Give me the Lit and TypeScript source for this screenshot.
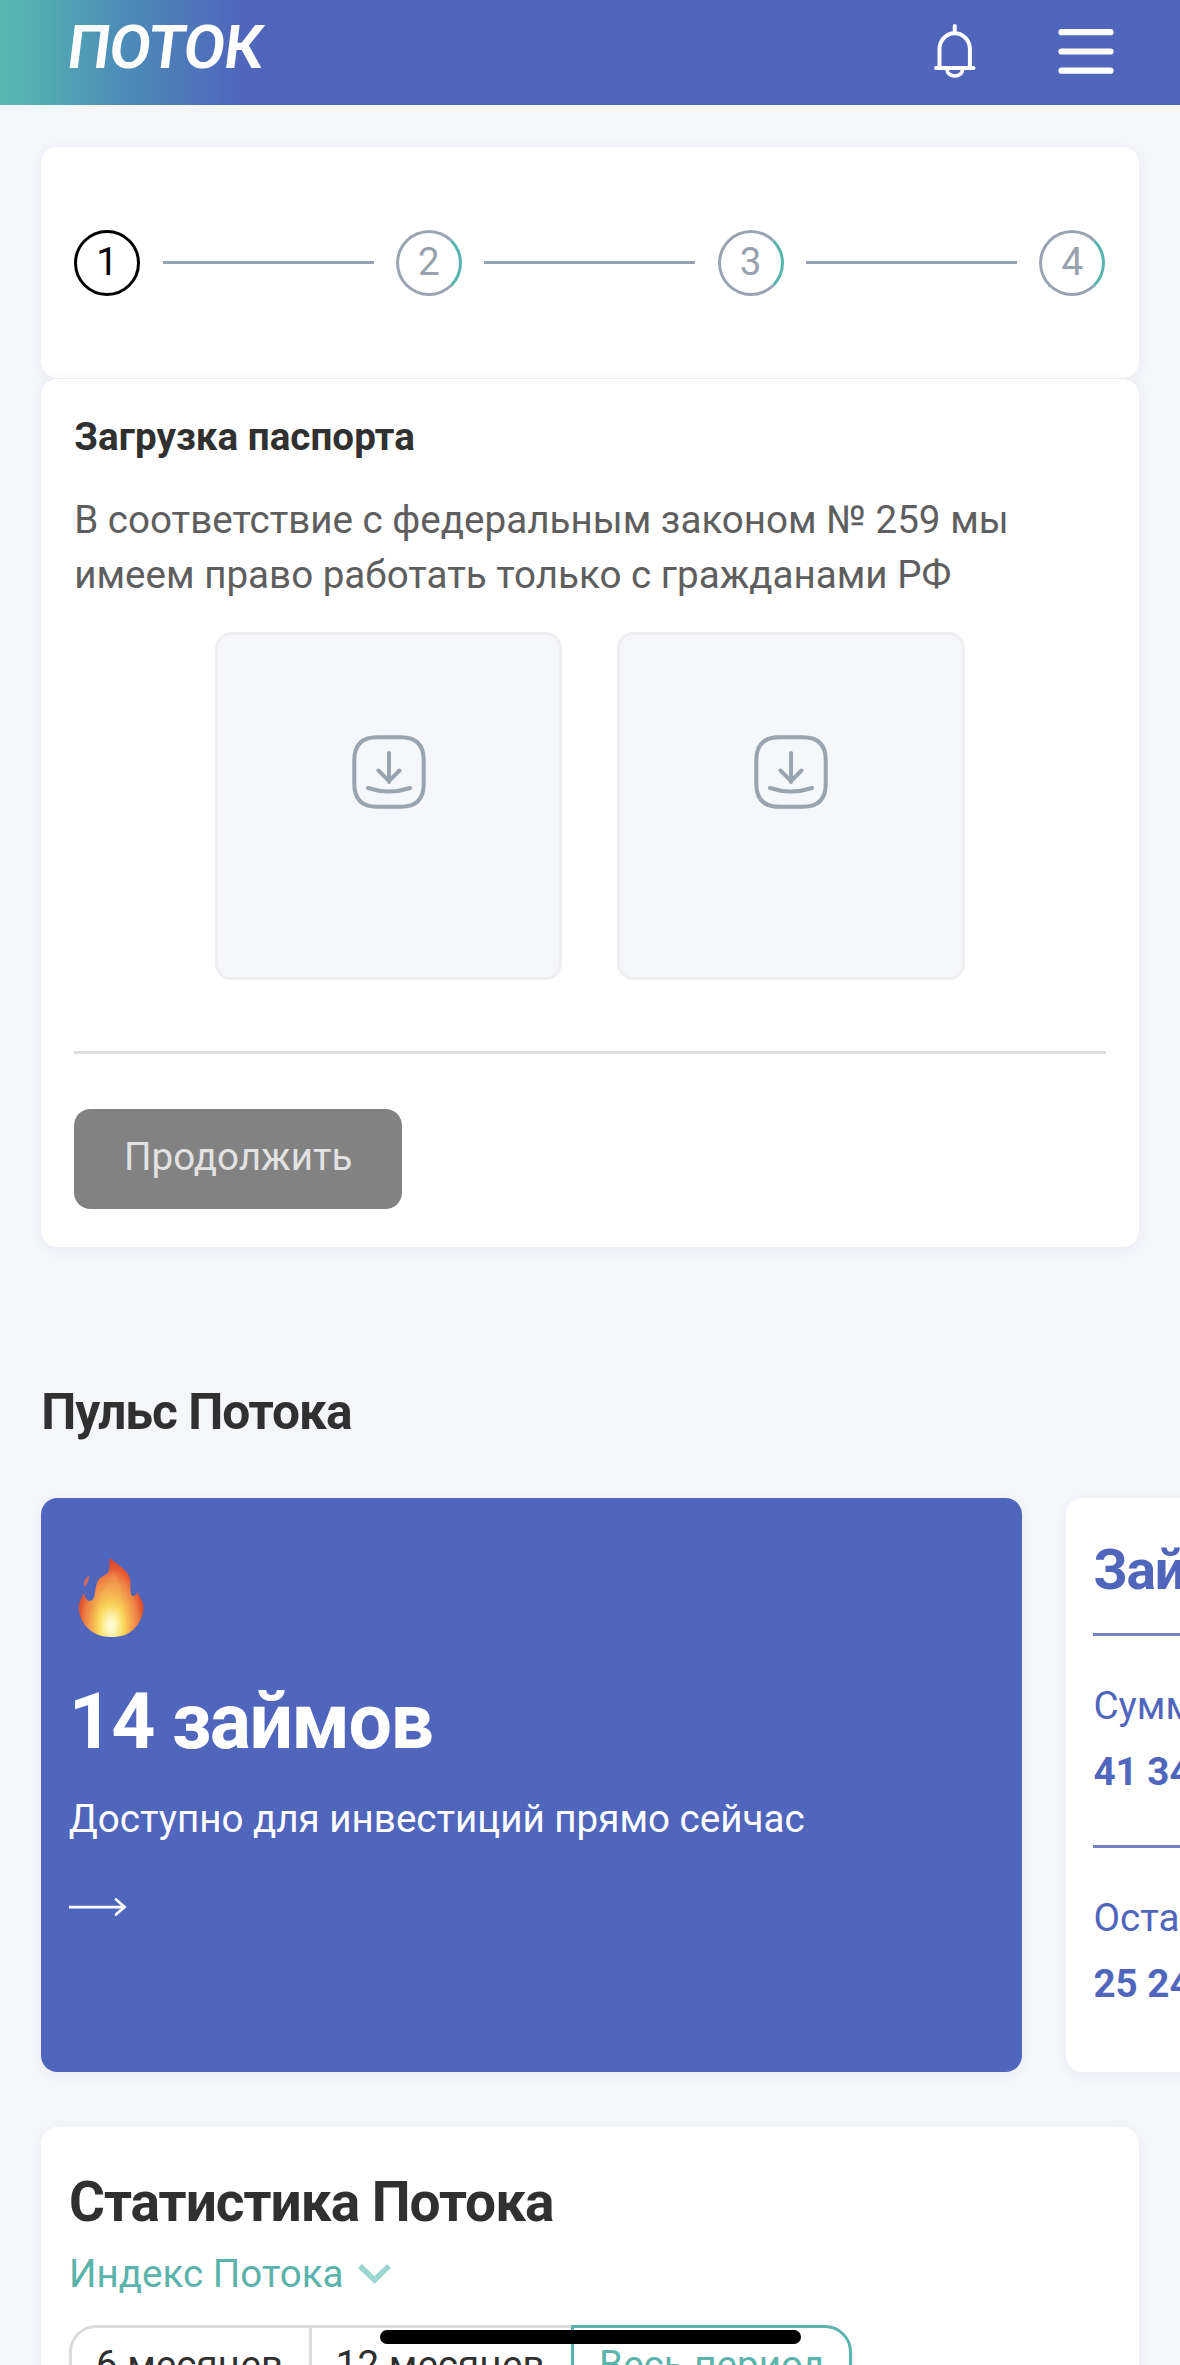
import { LitElement, html, css } from "lit";
import { customElement, property } from "lit/decorators.js";

const downloadIcon = html`<svg width="74" height="74" viewBox="0 0 74 74" fill="none" stroke="#9aa4b1" stroke-width="4" stroke-linecap="round" stroke-linejoin="round">
  <path d="M25 2.3 H49 C64 2.3 71.700 10 71.700 25 V49 C71.700 64 64 71.700 49 71.700 H25 C10 71.700 2.300 64 2.300 49 V25 C2.300 10 10 2.300 25 2.300 Z"/>
  <path d="M37 18 V47 M26.500 35.500 L37 46.200 L47.500 35.500 M16 53 Q37 60 58 53"/>
</svg>`;

const flameIcon = html`<svg class="flame" width="66" height="82" viewBox="0 0 66 82">
  <defs>
    <radialGradient id="fire" gradientUnits="userSpaceOnUse" cx="33" cy="70" r="64" gradientTransform="translate(33 70) scale(.54 1) translate(-33 -70)">
      <stop offset="0" stop-color="#fffce0"/>
      <stop offset=".14" stop-color="#fdf5b4"/>
      <stop offset=".36" stop-color="#f9d95c"/>
      <stop offset=".58" stop-color="#f3a64c"/>
      <stop offset=".76" stop-color="#ee8247"/>
      <stop offset=".92" stop-color="#e4552f"/>
      <stop offset="1" stop-color="#df492a"/>
    </radialGradient>
    <linearGradient id="core" x1="0" y1="0" x2="0" y2="1">
      <stop offset="0" stop-color="#f0864a" stop-opacity=".3"/>
      <stop offset=".4" stop-color="#f4a851" stop-opacity=".8"/>
      <stop offset="1" stop-color="#f9d65a" stop-opacity="0"/>
    </linearGradient>
  </defs>
  <path fill="url(#fire)" d="M32 1.500 C35 6.500 45 10 50.500 19 C54.500 27 51 34 53.500 39.500 C57 41 59 38 59.300 35.500 C61 41 65.500 45 65.500 52 C65 61 61 68 56 73 C50 79 43 81 33 81 C23 81 16 78 9.500 72 C4 66 .5 59 .8 51 C1 45 4 41 6.300 37 C6.800 41 8 45 12 44.800 C18 44 16 35 19 27 C22 18 29 21 31 14 C32 10 31 6 32 1.500 Z"/>
  <path fill="url(#core)" d="M34 15 C42 22 43 31 43 42 L45 60 H19 L23 42 C24 33 34 26 34 15 Z"/>
  <path fill="#c9695f" d="M11.500 19.500 C6.500 22 5 26 6.500 31 C10 28 10.500 24 11.500 19.500 Z"/>
</svg>`;

@customElement("step-progress")
class StepProgress extends LitElement {
  @property({ type: Number }) total = 4;
  @property({ type: Number }) current = 1;

  static styles = css`
    :host { display: flex; align-items: center; justify-content: space-between; }
    .dot {
      box-sizing: border-box; width: 66px; height: 66px; border-radius: 50%;
      border: 3px solid #9aa4b1; border-right-color: #56b5ac; color: #9aa1ae;
      font-size: 38.6px; line-height: 57px; text-align: center; flex: none;
    }
    .dot.active { border-color: #000; color: #000; }
    .line { width: 211px; height: 3px; background: #97a2b0; }
  `;

  render() {
    const steps = Array.from({ length: this.total }, (_, i) => i + 1);
    return steps.map((n) => html`
      ${n > 1 ? html`<div class="line"></div>` : ""}
      <div class="dot ${n === this.current ? "active" : ""}">${n}</div>`);
  }
}

@customElement("app-root")
class AppRoot extends LitElement {
  static styles = css`
    :host {
      display: block; position: relative; width: 1180px; height: 2365px; overflow: hidden;
      background: #f4f6fa; color: #303030;
      font-family: Roboto, "Liberation Sans", sans-serif; font-size: 38.6px; line-height: 55px;
    }
    h1, h2, h3, p { margin: 0; }
    svg { display: block; }
    .header {
      box-sizing: border-box; height: 104.5px; padding: 0 66px 0 68px; display: flex; align-items: flex-start;
      background: linear-gradient(90deg, #57b8b0 0, #56b5b0 16px, #4c8db7 120px, #5065bc 245px);
    }
    .logo {
      margin: 12px auto 0 0; font-size: 60.5px; line-height: 72px; font-weight: 600;
      color: #fff; transform: skewX(-7deg); letter-spacing: -1.1px;
    }
    .bell { margin: 24px 82px 0 0; }
    .menu { margin-top: 28px; }
    .page { padding: 42.500px 41.500px 0 41.200px; }
    .card { background: #fff; border-radius: 16.500px; box-shadow: 0 3px 14px rgba(60, 66, 120, .06); }
    .steps { box-sizing: border-box; height: 231px; padding: 82.500px 33px 0; }
    .upload { margin-top: 1px; padding: 30.300px 33px 38px; }
    .upload-title { font-size: 38.6px; line-height: 55px; font-weight: 700; letter-spacing: .03px; }
    .upload-text { margin-top: 28px; color: #5e5e5e; }
    .slots { margin-top: 30px; display: flex; justify-content: center; gap: 55px; }
    .slot {
      box-sizing: border-box; width: 347.500px; height: 347.500px; border: 3px solid #efeff2; border-radius: 16.500px;
      background: #f6f7fa; display: flex; justify-content: center; padding-top: 99.800px;
    }
    .divider { margin-top: 71.500px; height: 3px; background: #dedede; }
    .button {
      margin-top: 55px; width: 328px; height: 99.500px; border: 0; border-radius: 16.500px; background: #828282; color: #e2e2e2;
      font: inherit; display: flex; justify-content: center; padding: 20px 0 0;
    }
    .section-title { margin-top: 135.500px; font-size: 49.6px; line-height: 60px; font-weight: 700; letter-spacing: -1px; }
    .pulse { margin-top: 55.500px; display: flex; gap: 44px; height: 574px; }
    .loans { box-sizing: border-box; width: 980.800px; flex: none; background: #5065bc; color: #fff; padding: 58.500px 27.500px 0; }
    .flame { margin-left: 9px; }
    .loans-count { margin-top: 39px; font-size: 77px; line-height: 90px; font-weight: 700; letter-spacing: -1.500px; }
    .loans-text { margin-top: 23.500px; }
    .arrow { margin-top: 50.500px; }
    .totals { box-sizing: border-box; width: 980.500px; flex: none; color: #5065bc; padding: 39.200px 27.500px 0; white-space: nowrap; }
    .totals-title { font-size: 55px; line-height: 66px; font-weight: 700; letter-spacing: -1.050px; }
    .rule { height: 3px; background: #7182c6; margin: 30px 0 42px; }
    .rule.second { margin-top: 46px; }
    .value { margin-top: 11.200px; font-weight: 700; }
    .stats { margin-top: 55px; height: 400px; box-sizing: border-box; padding: 42.200px 27.800px 0; }
    .stats-title { font-size: 55px; line-height: 66px; font-weight: 700; letter-spacing: -1px; }
    .select { margin-top: 11px; display: flex; align-items: center; gap: 14px; color: #5bb4ab; }
    .chevron { margin-top: 2px; }
    .periods { margin-top: 24.300px; display: flex; }
    .period {
      box-sizing: border-box; height: 92px; border: 3px solid #dcdcdc; border-right-width: 0;
      padding: 8.500px 0 0; text-align: center;
    }
    .p6 { width: 240px; padding-right: 2px; border-radius: 27px 0 0 27px; }
    .p12 { width: 262.500px; padding-right: 3px; }
    .all { width: 281px; border: 3px solid #5bb4ab; border-radius: 0 27px 27px 0; color: #5bb4ab; }
    .home-bar { position: absolute; left: 379.500px; top: 2330px; width: 421.500px; height: 14px; border-radius: 7px; background: #000; }
  `;

  render() {
    return html`
      <header class="header">
        <div class="logo">ПОТОК</div>
        <svg class="bell" width="42" height="54" viewBox="0 0 42 54" fill="none" stroke="#fff" stroke-width="4" stroke-linecap="round">
          <path d="M20.700 2 V9 M5.500 43 V25 A15.200 15.700 0 0 1 35.900 25 V43 M2 44 H39.500"/>
          <path d="M13 45.500 A7.800 6.500 0 0 0 28.600 45.500" stroke-width="3.600"/>
        </svg>
        <svg class="menu" width="56" height="47" viewBox="0 0 56 47" stroke="#fff" stroke-width="6.200" stroke-linecap="round">
          <path d="M3.500 4.200 H52.500 M3.500 23.500 H52.500 M3.500 42.700 H52.500"/>
        </svg>
      </header>
      <main class="page">
        <section class="card steps"><step-progress></step-progress></section>
        <section class="card upload">
          <h2 class="upload-title">Загрузка паспорта</h2>
          <p class="upload-text">В соответствие с федеральным законом № 259 мы<br>имеем право работать только с гражданами РФ</p>
          <div class="slots">
            <div class="slot">${downloadIcon}</div>
            <div class="slot">${downloadIcon}</div>
          </div>
          <div class="divider"></div>
          <button class="button">Продолжить</button>
        </section>
        <h2 class="section-title">Пульс Потока</h2>
        <div class="pulse">
          <section class="card loans">
            ${flameIcon}
            <h1 class="loans-count">14 займов</h1>
            <p class="loans-text">Доступно для инвестиций прямо сейчас</p>
            <svg class="arrow" width="60" height="22" viewBox="0 0 60 22" fill="none" stroke="#fff" stroke-width="2.750" stroke-linecap="round">
              <path d="M0 11 H56" stroke-linecap="butt"/><path d="M47 3.500 L55.500 11 L47 18.500"/>
            </svg>
          </section>
          <section class="card totals">
            <h3 class="totals-title">Займы</h3>
            <div class="rule"></div>
            <p>Сумма</p>
            <p class="value">41 34</p>
            <div class="rule second"></div>
            <p>Осталось</p>
            <p class="value">25 24</p>
          </section>
        </div>
        <section class="card stats">
          <h2 class="stats-title">Статистика Потока</h2>
          <div class="select">
            <span>Индекс Потока</span>
            <svg class="chevron" width="33" height="20" viewBox="0 0 33 20" fill="none" stroke="#9bd6d1" stroke-width="5.500"><path d="M2 2 L16.500 16 L31 2"/></svg>
          </div>
          <div class="periods">
            <div class="period p6">6 месяцев</div>
            <div class="period p12">12 месяцев</div>
            <div class="period all">Весь период</div>
          </div>
        </section>
      </main>
      <div class="home-bar"></div>
    `;
  }
}
